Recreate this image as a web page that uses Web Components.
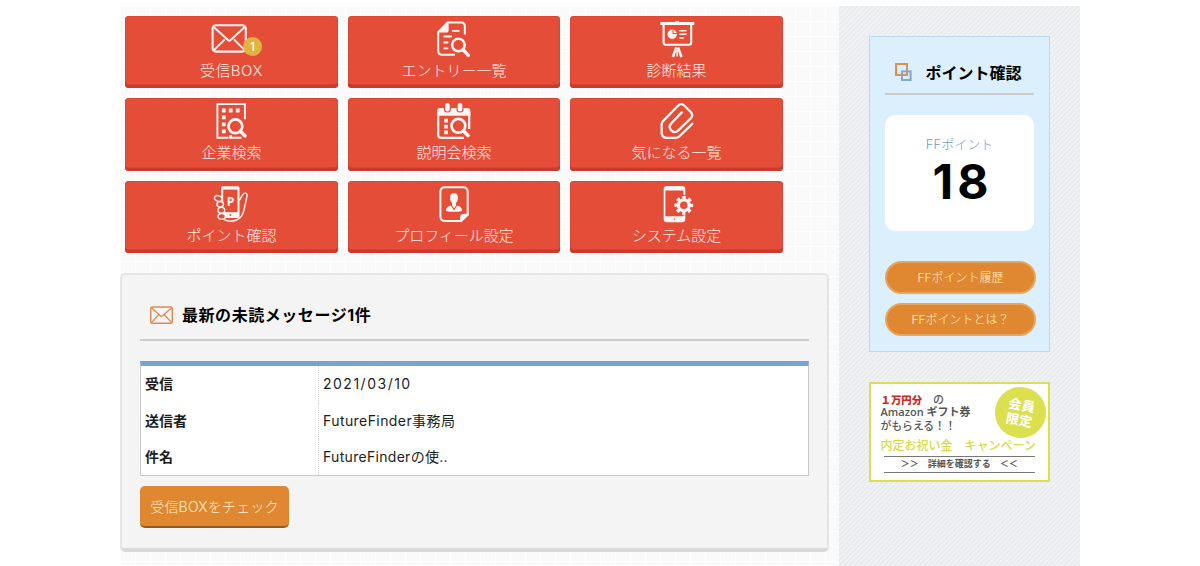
<!DOCTYPE html>
<html lang="ja">
<head>
<meta charset="utf-8">
<title>FutureFinder</title>
<style>
body {
  margin: 0;
  background: #fff;
  color: #1c1c1c;
  font-family: Inter, "Noto Sans CJK JP", sans-serif;
}
</style>
</head>
<body>
<ff-layout>
  <ff-menu>
    <ff-tile icon="mail" badge="1" style="--ls:.45px">受信BOX</ff-tile>
    <ff-tile icon="entry">エントリー一覧</ff-tile>
    <ff-tile icon="board">診断結果</ff-tile>
    <ff-tile icon="company">企業検索</ff-tile>
    <ff-tile icon="calendar">説明会検索</ff-tile>
    <ff-tile icon="clip">気になる一覧</ff-tile>
    <ff-tile icon="hand">ポイント確認</ff-tile>
    <ff-tile icon="profile">プロフィール設定</ff-tile>
    <ff-tile icon="system">システム設定</ff-tile>
  </ff-menu>
  <ff-panel>
    <span slot="title">最新の未読メッセージ1件</span>
    <ff-table>
      <ff-row label="受信" style="--ls:1.5px">2021/03/10</ff-row>
      <ff-row label="送信者">FutureFinder事務局</ff-row>
      <ff-row label="件名" style="--ls:.3px">FutureFinderの使..</ff-row>
    </ff-table>
    <ff-button>受信BOXをチェック</ff-button>
  </ff-panel>
  <ff-points slot="side" label="FFポイント" value="18">
    <span slot="title">ポイント確認</span>
    <ff-pill>FFポイント履歴</ff-pill>
    <ff-pill>FFポイントとは？</ff-pill>
  </ff-points>
  <ff-banner slot="side"></ff-banner>
</ff-layout>

<script>
const RED = '#e44e39'

// every icon is drawn on a 48x36 box
const icons = {
  mail: `
    <rect x="5.6" y="4.2" width="33.2" height="26.4" rx="3.4"/>
    <path d="M7 6.2 21 19Q22.3 20.3 23.6 19L37.6 6.2M7 29.2 17.8 18.4M37.6 29.2 27 18.4" stroke-width="1.9"/>`,
  entry: `
    <path d="M34.8 13.5V5Q34.8 1.4 31.3 1.4H17.5L8.2 11.2V30Q8.2 33.8 12 33.8H25" stroke-width="2"/>
    <path class="f" d="M18.6 1V9Q18.6 11.6 16 11.6H7.6z"/>
    <path d="M22 9.8H29.5M13.5 15.5H22M13.5 21.5H18.3M13.5 27.4H18.3" stroke-width="1.8"/>
    <circle cx="28.4" cy="24" r="6.3" stroke-width="2.6"/>
    <path d="M33 28.8 38.4 34.4" stroke-width="3.4" stroke-linecap="round"/>`,
  board: `
    <path class="f" d="M7.3 1H22.5V0H26V1H41.3V4H7.3z"/>
    <path d="M10.6 4V21.6Q10.6 23.8 12.8 23.8H36Q38.2 23.8 38.2 21.6V4"/>
    <circle class="f" cx="19.2" cy="13.3" r="4.7"/>
    <path d="M20 12.7V8.6M20 12.6H24" stroke="${RED}" stroke-width="1"/>
    <path d="M26.3 9.7H33.6M26.3 13.3H33.6M26.3 16.9H30.8" stroke-width="1.5"/>
    <path d="M23.3 26.4 19.9 36M25 26.4 28.4 36" stroke-width="2.6"/>
    <path d="M24.1 29V35.5" stroke-width="1.5"/>`,
  company: `
    <path d="M37.9 16.2V1.1H10.4V34.8H21.5M25 34.8H34.5" stroke-width="1.9"/>
    <path class="f" d="M14.9 5.6h3.8v3.8h-3.8zM21.8 5.6h3.8v3.8h-3.8zM28.8 5.6h3.8v3.8h-3.8zM14.9 12.5h3.8v3.8h-3.8zM14.9 19.5h3.8v3.8h-3.8zM14.9 26.5h3.8v3.8h-3.8zM22 32.2h3v3.5h-3z"/>
    <circle cx="28.4" cy="23.3" r="6.9" stroke-width="2.7"/>
    <path d="M33.4 28.3 38 32.8" stroke-width="3.6" stroke-linecap="round"/>`,
  calendar: `
    <path d="M39.2 26V8M8.2 9V32Q8.2 34.9 11.2 34.9H34" stroke-width="2.2"/>
    <path class="f" d="M7.1 12.8V8Q7.1 5 10.1 5H37.3Q40.3 5 40.3 8V12.8z"/>
    <path d="M17.4 2.8V6M30 2.8V6" stroke="${RED}" stroke-width="7.2" stroke-linecap="round"/>
    <path d="M17.4 2.3V6.2M30 2.3V6.2" stroke-width="4.7" stroke-linecap="round"/>
    <path class="f" d="M14.2 15.8h3.7v3.7h-3.7zM14.2 21.7h3.7v3.7h-3.7zM14.2 27.5h3.7v3.7h-3.7z"/>
    <circle cx="28.4" cy="22.8" r="6.9" stroke-width="2.7"/>
    <path d="M33.3 27.7 38 32.5" stroke-width="3.7" stroke-linecap="round"/>`,
  clip: `
    <path stroke-linecap="round" stroke-width="2.3" d="M39.3 20.8 26.2 33.5Q24.8 34.9 22.6 34.9H14Q8.6 34.9 8.6 29.5V21.5Q8.6 19.5 10 18.1L25 2.8Q28.3 -.4 31.4 2.8L37.7 9Q40.8 12.2 37.7 15.4L25.3 27.4Q21.8 30.8 18.5 27.6 14.9 24 18.2 20.4L28.8 9.4"/>`,
  hand: `
    <path d="M32.3 14.4 35.6 8.8Q37.2 6.5 39 7.3 40.6 8 40 10.3L36.8 24.6Q35.3 31.5 29.5 34 23.5 36.5 17.4 33.8" stroke-width="1.4"/>
    <rect class="f" x="14.2" y=".2" width="18.3" height="31.7" rx="1.6"/>
    <rect x="16.2" y="3.6" width="14.3" height="22.6" style="fill:${RED};stroke:none"/>
    <circle cx="23.4" cy="29" r=".9" style="fill:${RED};stroke:none"/>
    <text x="23.4" y="19.8">P</text>
    <g stroke-width="1.4" style="fill:${RED}">
      <ellipse cx="11.2" cy="12.5" rx="3.8" ry="2.7" transform="rotate(18 11.2 12.5)"/>
      <ellipse cx="13.2" cy="18.3" rx="3.3" ry="2.7"/>
      <ellipse cx="14.3" cy="24.3" rx="3.4" ry="2.9"/>
      <ellipse cx="14.7" cy="30.4" rx="3.6" ry="2.8"/>
    </g>`,
  profile: `
    <path d="M31 35H15.2Q10.4 35 10.4 30.2V6Q10.4 1.3 15.2 1.3H32.9Q37.7 1.3 37.7 6V28.4" stroke-width="2"/>
    <path class="f" d="M38.7 27.6V29.3L31.6 36.1H30V31Q30 28.4 32.6 28z"/>
    <path class="f" d="M24 7.3C27 7.3 28.2 9.3 28 12 27.8 14.6 26.6 16 26 17.3V19.4L24 22.4 22 19.4V17.3C21.4 16 20.2 14.6 20 12 19.8 9.3 21 7.3 24 7.3z"/>
    <path class="f" d="M20.8 19.6 24 24.4 27.2 19.6Q31.8 20.6 32.1 24.9 24 26.6 15.9 24.9 16.2 20.6 20.8 19.6z"/>`,
  system: `
    <path class="f" fill-rule="evenodd" d="M14 0H29Q32.3 0 32.3 3.3V9.2L30.4 8.8V4.6H12.4V30.2H30.4V29.4L32.3 29V33Q32.3 36.3 29 36.3H14Q10.7 36.3 10.7 33V3.3Q10.7 0 14 0z"/>
    <circle cx="21.5" cy="33" r=".8" style="fill:${RED};stroke:none"/>
    <circle cx="30.8" cy="19.3" r="5.4" stroke-width="3.2"/>
    <circle cx="30.8" cy="19.3" r="7.9" stroke-width="2.9" stroke-dasharray="3.4 2.805" stroke-dashoffset="1.7"/>`
}

const mailIcon = `
  <svg class="mail" width="24" height="18" viewBox="0 0 24 18" fill="none" stroke="#df8a55" stroke-width="1.3">
    <rect x=".7" y=".9" width="21.6" height="16.4" rx="1.8" stroke-width="1.5"/>
    <path d="M1.7 1.9 10.4 9.8Q11.5 10.7 12.6 9.8L21.4 1.9M1.7 16.4 8.8 8.5M21.4 16.4 14.2 8.5"/>
  </svg>`

function define(name, html) {
  const template = document.createElement('template')
  window.customElements.define(name, class extends HTMLElement {
    constructor() {
      super()
      template.innerHTML = typeof html === 'function' ? html(this) : html
      this.attachShadow({mode: 'open'})
      this.shadowRoot.appendChild(template.content.cloneNode(true))
    }
  })
}

define('ff-layout', `
<style>
:host {
  display: grid;
  grid-template-columns: 719px 241px;
  width: 960px;
  height: 560px;
  margin: 0 auto;
  padding-top: 6px;
  overflow: hidden;
}
main {
  background:
    linear-gradient(90deg, #fff 1.5px, transparent 1.5px) 0 0 / 15px 15px,
    linear-gradient(#fff 1.5px, transparent 1.5px) 0 0 / 15px 15px,
    #fafafa;
}
aside {
  display: flex;
  flex-direction: column;
  align-items: flex-start;
  gap: 30px;
  padding: 30px 0 0 30px;
  background: repeating-linear-gradient(135deg, #eff1f2 0 1.9px, #e6e9eb 2.5px 3.1px, #eff1f2 3.54px);
}
</style>
<main><slot></slot></main>
<aside><slot name="side"></slot></aside>`)

define('ff-menu', `
<style>
:host {
  display: grid;
  grid-template-columns: repeat(3, 1fr);
  grid-auto-rows: 72.7px;
  gap: 9.7px 9.8px;
  width: 658px;
  padding: 9.8px 0 0 5px;
}
</style>
<slot></slot>`)

define('ff-tile', el => `
<style>
:host {
  position: relative;
  display: flex;
  flex-direction: column;
  align-items: center;
  box-sizing: border-box;
  padding-top: 5.2px;
  border-radius: 4px;
  background: ${RED};
  box-shadow: inset 0 -3.6px #cb3a2b, inset 0 0 0 .6px #d0432f;
  color: #ffe9e3;
}
svg {
  width: 48px;
  height: 36px;
  overflow: visible;
  fill: none;
  stroke: #fff5f2;
  stroke-width: 2.1;
}
.f { fill: #fff5f2; stroke: none; }
text {
  fill: #fff5f2;
  stroke: none;
  font: bold 12px "Open Sans", sans-serif;
  text-anchor: middle;
}
.label {
  margin-top: 4px;
  font-size: 15px;
  font-weight: 300;
  line-height: 20px;
  letter-spacing: var(--ls, 0);
  white-space: nowrap;
}
.badge {
  position: absolute;
  top: 21.2px;
  left: calc(50% + 11.4px);
  width: 19.4px;
  height: 19.4px;
  border-radius: 50%;
  background: #e0b43e;
  color: #fffbe8;
  font-size: 12px;
  font-weight: 500;
  line-height: 19.4px;
  text-align: center;
}
</style>
<svg viewBox="0 0 48 36">${icons[el.getAttribute('icon')]}</svg>
<span class="label"><slot></slot></span>
${el.hasAttribute('badge') ? `<span class="badge">${el.getAttribute('badge')}</span>` : ''}`)

define('ff-panel', `
<style>
:host {
  display: block;
  box-sizing: border-box;
  width: 709px;
  height: 279px;
  margin-top: 20px;
  padding: 23px 18px 0;
  border: 2px solid #e5e5e5;
  border-bottom: 4.5px solid #dadada;
  border-radius: 5px;
  background: #f4f4f4;
}
header {
  display: flex;
  align-items: center;
  gap: 8.5px;
  height: 41px;
  padding: 0 0 0 9.5px;
  border-bottom: 2px solid #ccc;
  color: #000;
  font-size: 16px;
  font-weight: 700;
  letter-spacing: .55px;
}
header .text { margin-top: -9px; }
header .mail { margin-top: -7px; }
</style>
<header>${mailIcon}<div class="text"><slot name="title"></slot></div></header>
<slot></slot>`)

define('ff-table', `
<style>
:host {
  display: flex;
  flex-direction: column;
  box-sizing: border-box;
  height: 115px;
  margin: 20px 0 10px;
  border: 1px solid #c8c8c8;
  border-top: 5px solid #76a3cf;
  background: #fff;
}
</style>
<slot></slot>`)

define('ff-row', el => `
<style>
:host {
  display: grid;
  grid-template-columns: 178px 1fr;
  flex: 1;
  font-size: 14px;
  line-height: 36px;
}
b { padding-left: 4px; border-right: 1px dotted #d4d4d4; }
span { padding-left: 4px; letter-spacing: var(--ls, .42px); }
</style>
<b>${el.getAttribute('label')}</b>
<span><slot></slot></span>`)

define('ff-button', `
<style>
:host {
  display: flex;
  align-items: center;
  justify-content: center;
  box-sizing: border-box;
  width: 149px;
  height: 42px;
  padding-bottom: 1px;
  border-bottom: 2px solid #995a19;
  border-radius: 5px;
  background: #df8731;
  color: #fff0c8;
  font-size: 14px;
  font-weight: 300;
  letter-spacing: .2px;
  white-space: nowrap;
}
</style>
<slot></slot>`)

define('ff-points', el => `
<style>
:host {
  display: block;
  box-sizing: border-box;
  width: 181px;
  height: 315.5px;
  padding: 19px 13px 0 15px;
  border: 1px solid #b8daec;
  background: #dbf0fc;
}
header {
  display: flex;
  align-items: center;
  width: 149px;
  height: 37px;
  box-sizing: border-box;
  padding: 0 0 5px 10px;
  gap: 13.5px;
  color: #000;
  font-size: 16px;
  font-weight: 700;
  white-space: nowrap;
}
hr { width: 149px; height: 2px; margin: 0 0 20px; border: 0; background: #ccc; }
.card {
  display: flex;
  flex-direction: column;
  align-items: center;
  box-sizing: border-box;
  width: 149px;
  height: 116px;
  margin-bottom: 30px;
  padding-top: 18.5px;
  border-radius: 10px;
  background: #fff;
}
.card span { color: #6f9fc6; font-size: 13px; font-weight: 300; line-height: 20px; }
.card strong {
  padding-left: 6px;
  color: #000;
  font-size: 48px;
  line-height: 56px;
  letter-spacing: 4px;
}
.list { display: flex; flex-direction: column; gap: 9.5px; }
</style>
<header>
  <svg width="17" height="19" viewBox="0 0 17 19" fill="none" stroke-width="2">
    <rect x="1" y="1" width="11" height="11" stroke="#d99055"/>
    <rect x="7" y="8.4" width="8.6" height="8.6" stroke="#7fa9cd"/>
  </svg>
  <slot name="title"></slot>
</header>
<hr>
<div class="card"><span>${el.getAttribute('label')}</span><strong>${el.getAttribute('value')}</strong></div>
<div class="list"><slot></slot></div>`)

define('ff-pill', `
<style>
:host {
  display: flex;
  align-items: center;
  justify-content: center;
  box-sizing: border-box;
  width: 151px;
  height: 32.5px;
  padding-bottom: 1px;
  border: 2px solid #e8a55c;
  border-radius: 17px;
  background: #df8731;
  color: #fff0c8;
  font-size: 12px;
  font-weight: 300;
  white-space: nowrap;
}
</style>
<slot></slot>`)

define('ff-banner', `
<style>
:host {
  position: relative;
  display: block;
  box-sizing: border-box;
  width: 181px;
  height: 100px;
  padding: 10px 9px 0 9.5px;
  border: 2px solid #dbde52;
  background: #fff;
  color: #555;
  font: 600 11px/12.6px "Open Sans", "Noto Sans CJK JP", sans-serif;
  white-space: nowrap;
}
p { margin: 0; }
.lead { font-weight: 500; }
.last { font-size: 10.8px; font-weight: 500; line-height: 13.2px; }
em { color: #cc2a20; font-style: normal; font-weight: 800; font-size: 10.4px; }
.name { margin-top: 5.4px; color: #d8db48; font-size: 12px; font-weight: 500; line-height: 17px; }
.more {
  display: flex;
  justify-content: center;
  gap: 9px;
  box-sizing: border-box;
  height: 17px;
  margin: 2px 4px 0 3px;
  border: 1px solid #777;
  border-width: 1px 0;
  font-size: 9px;
  line-height: 13px;
}
.seal {
  position: absolute;
  top: 3px;
  right: 2px;
  display: flex;
  flex-direction: column;
  justify-content: center;
  width: 51px;
  height: 51px;
  border-radius: 50%;
  background: #dce04f;
  color: #fff;
  font-size: 13.3px;
  font-weight: 700;
  line-height: 15px;
  text-align: center;
  transform: rotate(10deg);
}
</style>
<p class="lead"><em>１万円分</em>　の</p>
<p>Amazon ギフト券</p>
<p class="last">がもらえる！！</p>
<p class="name">内定お祝い金　キャンペーン</p>
<div class="more"><span>＞＞</span><span>詳細を確認する</span><span>＜＜</span></div>
<div class="seal"><span>会員</span><span>限定</span></div>`)
</script>
</body>
</html>
